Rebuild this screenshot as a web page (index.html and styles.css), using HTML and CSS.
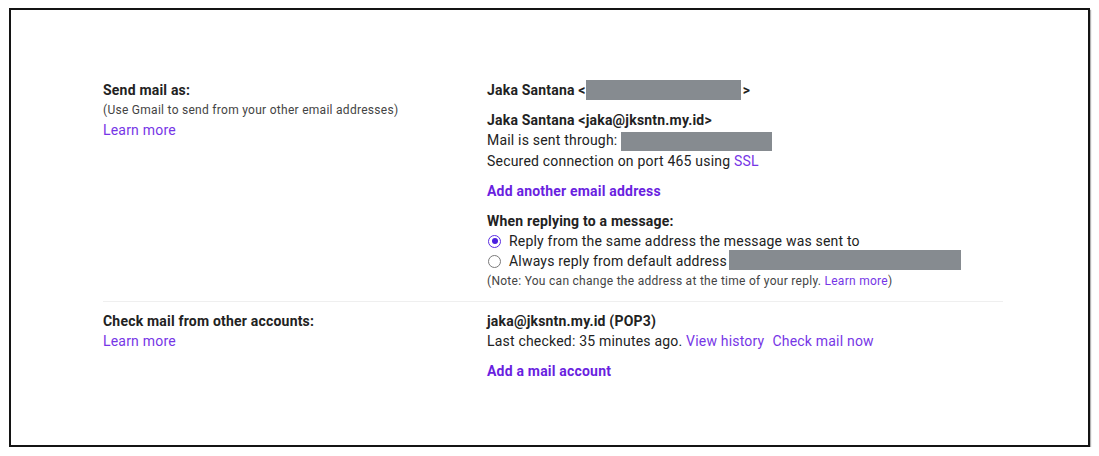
FILE: index.html
```html
<!DOCTYPE html>
<html lang="en">
<head>
<meta charset="utf-8">
<title>Accounts settings</title>
<link rel="stylesheet" href="styles.css">
</head>
<body>
<div class="frame">
  <div class="settings">
    <div class="row">
      <div class="label-col">
        <div class="label">Send mail as:</div>
        <div class="hint">(Use Gmail to send from your other email addresses)</div>
        <a class="link" href="#">Learn more</a>
      </div>
      <div class="value-col">
        <div class="line bold">Jaka Santana &lt;<span class="redact r1"></span>&gt;</div>
        <div class="block">
          <div class="line bold">Jaka Santana &lt;jaka@jksntn.my.id&gt;</div>
          <div class="line">Mail is sent through: <span class="redact r2"></span></div>
          <div class="line">Secured connection on port 465 using <a class="link" href="#">SSL</a></div>
        </div>
        <div class="block">
          <a class="line action" href="#">Add another email address</a>
        </div>
        <div class="block">
          <div class="line bold">When replying to a message:</div>
          <label class="line radio-line"><span class="radio checked"></span><span>Reply from the same address the message was sent to</span></label>
          <label class="line radio-line"><span class="radio"></span><span>Always reply from default address<span class="redact r3"></span></span></label>
          <div class="line note">(Note: You can change the address at the time of your reply. <a class="link" href="#">Learn more</a>)</div>
        </div>
      </div>
    </div>
    <div class="row">
      <div class="label-col">
        <div class="label">Check mail from other accounts:</div>
        <a class="link" href="#">Learn more</a>
      </div>
      <div class="value-col">
        <div class="line bold">jaka@jksntn.my.id (POP3)</div>
        <div class="line">Last checked: 35 minutes ago. <a class="link" href="#">View history</a><a class="link spaced" href="#">Check mail now</a></div>
        <div class="block">
          <a class="line action" href="#">Add a mail account</a>
        </div>
      </div>
    </div>
  </div>
</div>
</body>
</html>
```

FILE: styles.css
```css
html, body {
  margin: 0;
  padding: 0;
  background: #ffffff;
}

body {
  font-family: Roboto, "Liberation Sans", Arial, sans-serif;
  color: #222222;
  font-size: 14px;
  line-height: 20px;
  letter-spacing: 0.2px;
}

.frame {
  box-sizing: border-box;
  margin: 8px 0 0 9px;
  width: 1081px;
  height: 439px;
  border: 2px solid #141414;
  box-shadow: 1px 2px 1px rgba(0, 0, 0, 0.3);
  padding: 70px 0 0 92px;
}

.settings {
  width: 900px;
}

.row {
  display: grid;
  grid-template-columns: 384px 516px;
  padding-bottom: 10px;
  border-bottom: 1px solid #efefef;
}

.row + .row {
  padding-top: 9px;
  border-bottom: none;
}

.label-col {
  display: flex;
  flex-direction: column;
  align-items: flex-start;
}

.label {
  font-weight: 700;
  font-size: 14px;
  line-height: 20px;
}

.hint {
  font-size: 12px;
  line-height: 20px;
  letter-spacing: 0.28px;
  color: #444444;
}

.value-col {
  display: flex;
  flex-direction: column;
  align-items: flex-start;
}

.block {
  display: flex;
  flex-direction: column;
  align-items: flex-start;
  margin-top: 10px;
}

.line {
  display: block;
  white-space: nowrap;
  line-height: 20px;
}

.bold {
  font-weight: 700;
}

.link {
  color: #7636e6;
  text-decoration: none;
}

.spaced {
  margin-left: 8px;
}

.action {
  color: #6a1fe0;
  font-weight: 700;
  text-decoration: none;
}

.note {
  font-size: 12px;
  letter-spacing: 0.28px;
  color: #444444;
}

.redact {
  display: inline-block;
  background: #868b90;
  vertical-align: top;
}

.r1 {
  width: 155px;
  height: 20px;
  margin-left: 0;
  margin-right: 2px;
}

.r2 {
  width: 151px;
  height: 19px;
  margin-top: 2px;
}

.r3 {
  width: 232px;
  height: 20px;
  margin-left: 2px;
  margin-top: -1px;
}

.radio-line {
  display: flex;
  align-items: center;
  gap: 8px;
}

.radio {
  box-sizing: border-box;
  display: inline-block;
  flex: none;
  width: 13px;
  height: 13px;
  margin-left: 1px;
  border-radius: 50%;
  border: 1px solid #7a7a7a;
  position: relative;
}

.radio.checked {
  border: 1.5px solid #5b2ee2;
}

.radio.checked::after {
  content: "";
  position: absolute;
  left: 50%;
  top: 50%;
  width: 6px;
  height: 6px;
  margin: -3px 0 0 -3px;
  border-radius: 50%;
  background: #4b1fe0;
}
```
